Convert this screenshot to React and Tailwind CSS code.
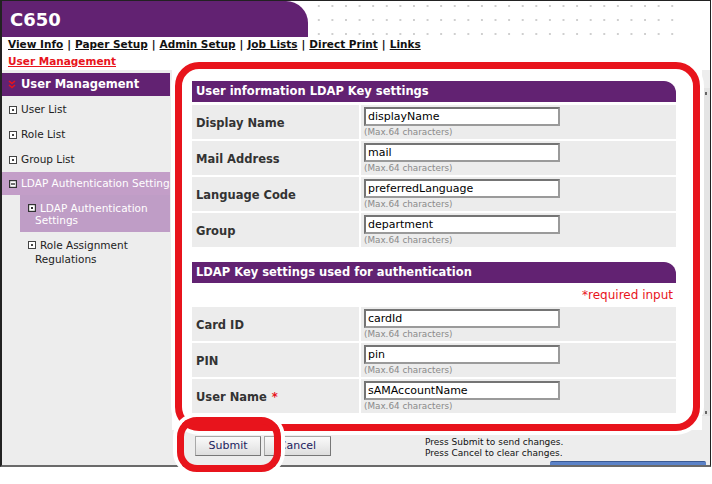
import React from "react";

const ItemIcon = ({ variant = "dot" }) => (
  <svg width="8" height="8" viewBox="0 0 8 8" className="shrink-0">
    {variant === "minus" ? (
      <>
        <rect x="0.5" y="0.5" width="7" height="7" fill="#fff" stroke="#333" strokeWidth="1.4" />
        <rect x="2" y="3.3" width="4" height="1.4" fill="#333" />
      </>
    ) : variant === "active" ? (
      <>
        <rect x="0.5" y="0.5" width="7" height="7" fill="#fff" stroke="#333" strokeWidth="1.4" />
        <rect x="3" y="3" width="2" height="2" fill="#333" />
      </>
    ) : (
      <>
        <rect x="0.5" y="0.5" width="7" height="7" fill="#fff" stroke="#444" strokeWidth="1" />
        <rect x="3" y="3" width="2" height="2" fill="#444" />
      </>
    )}
  </svg>
);

const Row = ({ label, value, req }) => (
  <div className="flex h-[34px] gap-[2px]">
    <div className="w-[167px] bg-[#ececec] flex items-center pl-[4px] pt-[3px] text-[11.5px] font-bold text-[#333]">
      {label}
      {req && <span className="text-[#e8141c] ml-[5px]">*</span>}
    </div>
    <div className="flex-1 bg-[#ececec] pl-[3px] pt-[2px]">
      <div className="w-[196px] h-[19px] bg-white border-2 border-[#9a9a9a] border-t-[#747474] border-l-[#747474] flex items-center pl-[2px] text-[11px] text-black leading-none">
        {value}
      </div>
      <div className="text-[8.8px] text-[#8a8a8a] leading-[11px] mt-[1px]">(Max.64 characters)</div>
    </div>
  </div>
);

const SectionHeader = ({ children }) => (
  <div className="h-[21px] bg-[#622272] rounded-tr-[12px] flex items-center pl-[4px] text-white text-[11.5px] font-bold">
    {children}
  </div>
);

export default function App() {
  return (
    <div className="w-[712px] h-[484px] bg-white relative overflow-hidden font-['DejaVu_Sans',Verdana,sans-serif]">
      <div className="w-[711px] h-[467px] border-l-2 border-t border-r border-b-2 border-[#222] border-b-[#6a6a6a] flex flex-col overflow-hidden">
        {/* header */}
        <div className="h-[36px] flex shrink-0">
          <div className="w-[306px] bg-[#622272] rounded-tr-[22px] flex items-center pl-[8px] text-white text-[18px] font-bold">
            C650
          </div>
          <div className="w-[366px] h-[36px] bg-[radial-gradient(circle,#cfcfcf_0.9px,transparent_1.3px)] bg-[length:13.6px_14px] bg-[position:4px_-2px]" />
        </div>
        {/* nav */}
        <div className="h-[15px] flex items-center pl-[6px] text-[10.5px] font-bold text-[#111] shrink-0 whitespace-nowrap">
          <span className="underline">View Info</span>
          <span className="mx-[4px]">|</span>
          <span className="underline">Paper Setup</span>
          <span className="mx-[4px]">|</span>
          <span className="underline">Admin Setup</span>
          <span className="mx-[4px]">|</span>
          <span className="underline">Job Lists</span>
          <span className="mx-[4px]">|</span>
          <span className="underline">Direct Print</span>
          <span className="mx-[4px]">|</span>
          <span className="underline">Links</span>
        </div>
        <div className="h-[18px] flex items-center pl-[6px] pt-[1px] text-[10.5px] font-bold text-[#e8141c] underline shrink-0">
          User Management
        </div>
        {/* body */}
        <div className="flex-1 flex bg-[#ededed] min-h-0">
          {/* sidebar */}
          <div className="w-[168px] shrink-0 pt-[3px] overflow-hidden">
            <div className="h-[23px] bg-[#622272] flex items-center pl-[6px] text-white text-[11.5px] font-bold">
              <svg width="8" height="9" viewBox="0 0 8 9" className="mr-[5px]">
                <path d="M1 1 L4 3.5 L7 1" stroke="#e8141c" strokeWidth="1.6" fill="none" />
                <path d="M1 5 L4 7.5 L7 5" stroke="#e8141c" strokeWidth="1.6" fill="none" />
              </svg>
              User Management
            </div>
            <div className="mt-[1px] text-[10.5px] text-[#222]">
              <div className="h-[25px] flex items-center pl-[7px] gap-[4px]">
                <ItemIcon />
                User List
              </div>
              <div className="h-[25px] flex items-center pl-[7px] gap-[4px]">
                <ItemIcon />
                Role List
              </div>
              <div className="h-[25px] flex items-center pl-[7px] gap-[4px]">
                <ItemIcon />
                Group List
              </div>
              <div className="h-[23px] flex items-center pl-[7px] gap-[4px] bg-[#c39ec8] text-white whitespace-nowrap">
                <ItemIcon variant="minus" />
                LDAP Authentication Settings
              </div>
              <div className="ml-[18px] h-[37px] bg-[#bf9dc6] text-white flex flex-col justify-center pl-[8px] leading-[12px]">
                <div className="flex items-center gap-[4px]">
                  <ItemIcon variant="active" />
                  LDAP Authentication
                </div>
                <div className="pl-[7px]">Settings</div>
              </div>
              <div className="ml-[18px] pt-[6px] pl-[8px] leading-[14px]">
                <div className="flex items-center gap-[4px]">
                  <ItemIcon />
                  Role Assignment
                </div>
                <div className="pl-[7px]">Regulations</div>
              </div>
            </div>
          </div>
          {/* main */}
          <div className="flex-1 flex flex-col min-w-0">
            <div className="ml-[2px] h-[360px] bg-white pl-[20px] pr-[26px] pt-[11px]">
              <SectionHeader>User information LDAP Key settings</SectionHeader>
              <div className="flex flex-col gap-[2px] mt-[3px]">
                <Row label="Display Name" value="displayName" />
                <Row label="Mail Address" value="mail" />
                <Row label="Language Code" value="preferredLanguage" />
                <Row label="Group" value="department" />
              </div>
              <div className="mt-[15px]">
                <SectionHeader>LDAP Key settings used for authentication</SectionHeader>
              </div>
              <div className="h-[24px] flex items-center justify-end pr-[3px] text-[12px] text-[#e8141c]">
                *required input
              </div>
              <div className="flex flex-col gap-[2px]">
                <Row label="Card ID" value="cardId" />
                <Row label="PIN" value="pin" />
                <Row label="User Name" value="sAMAccountName" req />
              </div>
            </div>
            <div className="flex-1 flex flex-col">
              <div className="flex pt-[6px] pl-[25px]">
                <button className="w-[66px] h-[20px] bg-[linear-gradient(#fafafa,#dedede)] border border-[#a8a8a8] border-r-[#777] border-b-[#777] text-[11px] text-[#22225e]">
                  Submit
                </button>
                <button className="ml-[3px] w-[67px] h-[20px] bg-[linear-gradient(#fafafa,#dedede)] border border-[#a8a8a8] border-r-[#777] border-b-[#777] text-[11px] text-[#22225e]">
                  Cancel
                </button>
                <div className="ml-[94px] text-[9px] leading-[10.5px] text-[#111] pt-[1px]">
                  <div>Press Submit to send changes.</div>
                  <div>Press Cancel to clear changes.</div>
                </div>
              </div>
              <div className="mt-auto flex justify-end">
                <div className="w-[156px] h-[4px] mr-[-4px] bg-[#5c83c9] border-t border-[#3b5a94] rounded-t-[2px]" />
              </div>
            </div>
          </div>
          {/* scrollbar */}
          <div className="w-[8px] shrink-0">
            <div className="mt-[18px] h-[328px] bg-[#e4e4e4] border-l border-[#c6c6c6] relative">
              <div className="absolute left-[2px] top-[4px] w-[2px] h-[3px] bg-[#666]" />
              <div className="absolute left-[2px] bottom-[2px] w-[2px] h-[3px] bg-[#666]" />
            </div>
          </div>
        </div>
      </div>

      {/* annotation rings */}
      <div className="absolute left-[175px] top-[62px] w-[525px] h-[369px] border-[7px] border-[#e8141c] rounded-[24px] shadow-[0_0_0_4px_#ffffff]" />
      <div className="absolute left-[177px] top-[417px] w-[104px] h-[55px] border-[7px] border-[#e8141c] rounded-[20px] shadow-[0_0_0_4px_#ffffff]" />
    </div>
  );
}
